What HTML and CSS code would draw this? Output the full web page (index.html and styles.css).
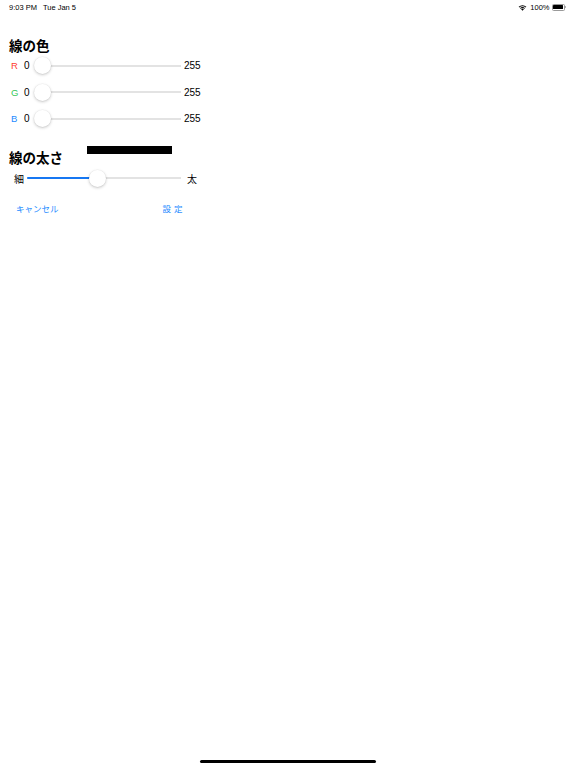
FILE: index.html
```html
<!DOCTYPE html>
<html lang="ja">
<head>
<meta charset="utf-8">
<title>線の設定</title>
<link rel="stylesheet" href="styles.css">
</head>
<body>
<div class="status">
  <div class="status-left"><span>9:03 PM</span><span class="date">Tue Jan 5</span></div>
  <div class="status-right">
    <svg class="wifi" width="9" height="7" viewBox="0 0 18 14">
      <path d="M9 13.5 L6.2 10.6 A4 4 0 0 1 11.8 10.6 Z" fill="#000"/>
      <path d="M3.9 8.3 A7.3 7.3 0 0 1 14.1 8.3 L12.7 9.7 A5.3 5.3 0 0 0 5.3 9.7 Z" fill="#000"/>
      <path d="M1.3 5.7 A11 11 0 0 1 16.7 5.7 L15.3 7.1 A9 9 0 0 0 2.7 7.1 Z" fill="#000"/>
    </svg>
    <span class="pct">100%</span>
    <span class="battery"><span class="battery-fill"></span></span><span class="nub"></span>
  </div>
</div>

<main class="content">
  <h2 class="title">線の色</h2>
  <div class="row">
    <span class="lbl red">R</span><span class="val">0</span>
    <div class="slider"><div class="knob" style="left:0px"></div></div>
    <span class="max">255</span>
  </div>
  <div class="row">
    <span class="lbl green">G</span><span class="val">0</span>
    <div class="slider"><div class="knob" style="left:0px"></div></div>
    <span class="max">255</span>
  </div>
  <div class="row">
    <span class="lbl blue">B</span><span class="val">0</span>
    <div class="slider"><div class="knob" style="left:0px"></div></div>
    <span class="max">255</span>
  </div>

  <div class="title-row">
    <h2 class="title">線の太さ</h2>
    <div class="preview"></div>
  </div>
  <div class="row thick-row">
    <span class="thin">細</span>
    <div class="slider wide"><div class="fill" style="width:71px"></div><div class="knob" style="left:62px"></div></div>
    <span class="thick">太</span>
  </div>

  <div class="buttons">
    <span class="btn cancel">キャンセル</span>
    <span class="btn ok"><span>設</span><span class="gap">定</span></span>
  </div>
</main>

<div class="spacer"></div>
<div class="home"></div>
</body>
</html>
```

FILE: styles.css
```css
html, body {
  margin: 0;
  padding: 0;
  background: #ffffff;
}
body {
  width: 576px;
  height: 768px;
  display: flex;
  flex-direction: column;
  font-family: "Liberation Sans", "Noto Sans CJK JP", sans-serif;
  color: #000;
  overflow: hidden;
}
.status {
  height: 14px;
  display: flex;
  justify-content: space-between;
  align-items: center;
  padding: 0 10px 0 9px;
  font-size: 7.5px;
}
.status-left .date {
  margin-left: 6px;
}
.status-right {
  display: flex;
  align-items: center;
}
.wifi {
  margin-right: 3px;
}
.pct {
  margin-right: 2px;
}
.battery {
  width: 10px;
  height: 4px;
  border: 1px solid #9a9a9a;
  border-radius: 1.5px;
  padding: 0.5px;
  display: flex;
}
.battery-fill {
  flex: 1;
  background: #000;
  border-radius: 0.5px;
}
.nub {
  width: 1px;
  height: 2.5px;
  background: #9a9a9a;
  margin-left: 0.5px;
  border-radius: 0 1px 1px 0;
}
.content {
  padding-left: 9px;
  width: 200px;
  font-family: "Liberation Sans", "Noto Sans CJK JP", sans-serif;
}
.title {
  margin: 22.5px 0 0 0;
  font-size: 13.5px;
  line-height: 16px;
  font-weight: bold;
  font-family: "Noto Sans CJK JP", sans-serif;
}
.row {
  display: flex;
  align-items: center;
  height: 26.5px;
}
.lbl {
  width: 13px;
  margin-left: 2px;
  font-size: 9.5px;
}
.red { color: #ff3b30; }
.green { color: #34c759; }
.blue { color: #1e8bff; }
.val {
  width: 10px;
  font-size: 10px;
}
.max {
  margin-left: 3px;
  font-size: 10px;
}
.slider {
  position: relative;
  width: 147px;
  height: 18px;
  background: linear-gradient(#e3e3e3, #e3e3e3) no-repeat 0 50% / 100% 2px;
}
.slider.wide {
  width: 154px;
}
.fill {
  height: 2px;
  margin-top: 8px;
  background: #1677f2;
  border-radius: 1px;
}
.knob {
  position: absolute;
  top: 0.5px;
  width: 17px;
  height: 17px;
  border-radius: 50%;
  background: #fff;
  box-shadow: 0 1px 3px rgba(0,0,0,0.22), 0 0 0 0.5px rgba(0,0,0,0.05);
}
.title-row {
  display: flex;
  justify-content: space-between;
  align-items: flex-start;
  width: 163px;
  margin-top: 14px;
}
.title-row .title {
  margin-top: 3px;
}
.preview {
  width: 85px;
  height: 8px;
  background: #000;
}
.thick-row {
  height: 25px;
  margin-top: 0.5px;
}
.thin {
  margin-left: 5px;
  margin-right: 3px;
  font-size: 10px;
  font-family: "Noto Sans CJK JP", sans-serif;
}
.thick {
  margin-left: 6px;
  font-size: 10px;
  font-family: "Noto Sans CJK JP", sans-serif;
}
.buttons {
  display: flex;
  margin-top: 11.5px;
  height: 12px;
  align-items: center;
  font-family: "Noto Sans CJK JP", sans-serif;
}
.btn {
  font-size: 8.5px;
  color: #1e8bff;
  line-height: 12px;
}
.cancel {
  margin-left: 7px;
}
.ok {
  margin-left: 104px;
  display: flex;
}
.ok .gap {
  margin-left: 3px;
}
.spacer {
  flex: 1;
}
.home {
  width: 176px;
  height: 3px;
  border-radius: 2px;
  background: #000;
  margin: 0 auto 5px auto;
}
```
